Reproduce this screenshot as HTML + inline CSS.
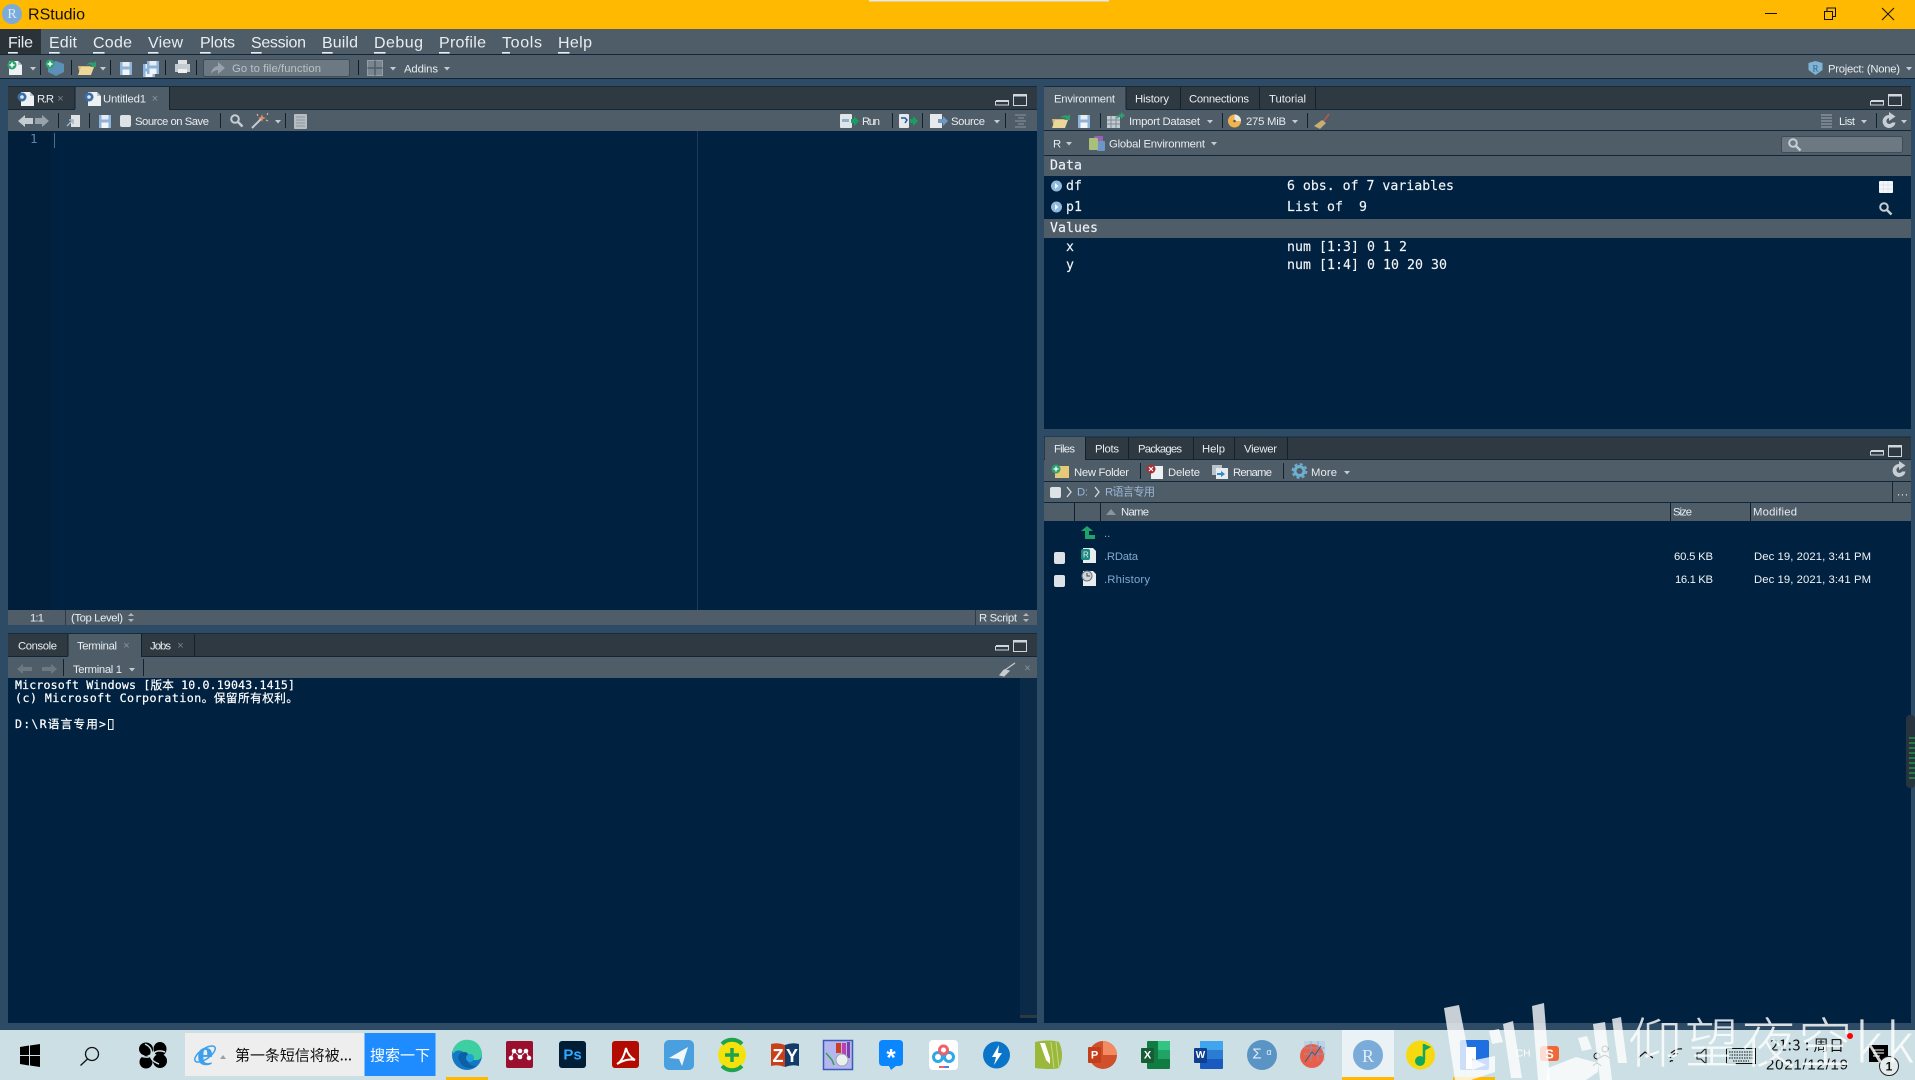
<!DOCTYPE html>
<html><head><meta charset="utf-8"><title>RStudio</title>
<style>
html,body{margin:0;padding:0;background:#2e4b66;overflow:hidden}
svg{display:block}
text{font-family:"Liberation Sans","Noto Sans CJK SC",sans-serif;dominant-baseline:central;fill:#e8edf0;white-space:pre}
.m{font-size:16px}
.u{font-size:11.3px;transform:translateY(.7px)}
.d{font-size:11.3px;fill:#f0f3f5}
.c{font-family:"DejaVu Sans Mono","Noto Sans CJK SC",monospace;font-size:13.2px;fill:#f2f5f7;transform:translateY(1px);stroke:#f2f5f7;stroke-width:.15px}
.h{font-family:"DejaVu Sans Mono","Noto Sans CJK SC",monospace;font-size:13.2px;fill:#eef2f5;transform:translateY(1px);stroke:#eef2f5;stroke-width:.15px}
.t{font-family:"DejaVu Sans Mono","Noto Sans CJK SC",monospace;font-size:11.6px;fill:#fff;stroke:#fff;stroke-width:.2px}
.tb{font-family:"Noto Sans CJK SC","Liberation Sans",sans-serif}
.l{font-size:11.3px;fill:#7fa8d0}
</style></head><body>
<svg xmlns="http://www.w3.org/2000/svg" width="1915" height="1080" viewBox="0 0 1915 1080">
<defs>
<path id="ar" d="M0 0h6l-3 3.500z" fill="#c4ccd2"/>
<g id="file"><path d="M0 0h9l4 4v10H0z" fill="#eef1f3"/><path d="M9 0v4h4z" fill="#b9c3cb"/></g>
<g id="fileR"><use href="#file" transform="translate(3 0)"/><circle cx="4" cy="5" r="4.500" fill="#3a6ea8"/><circle cx="4" cy="5" r="1.800" fill="#dfe8f2"/></g>
<g id="save"><path d="M0 0h12v13H0z" fill="#8db4d8"/><rect x="2.500" y="0" width="7" height="4.500" fill="#e6edf3"/><rect x="2.500" y="7.500" width="7" height="5.500" fill="#f2f5f7"/></g>
<g id="min"><path d="M.5 1.500h13v3.500H.5z" fill="none" stroke="#cfd6db"/><rect x="1" y="0" width="13" height="2" fill="#cfd6db"/></g>
<g id="max"><rect x=".5" y=".5" width="13" height="11" fill="none" stroke="#cfd6db"/><rect x="0" y="0" width="14" height="2.500" fill="#cfd6db"/></g>
<g id="open"><path d="M0 5h13v9H2z" fill="#d4b873"/><path d="M3 6h13l-3 8H0z" fill="#ecd79a"/><path d="M8 4q4-4 8-2l2-2v6h-6l2-2q-3-1-6 0z" fill="#2f9e6e"/></g>
<g id="ref"><path d="M7 1a6.500 6.500 0 1 0 6.500 7.500h-3.500a3 3 0 1 1-3-4.500v3l6.500-4.500-6.500-4.500z" fill="#c7ced4"/></g>
<g id="srch"><circle cx="5" cy="5" r="3.800" fill="none" stroke="#c6cdd3" stroke-width="2"/><path d="M8 8l4.500 4.500" stroke="#c6cdd3" stroke-width="2.500"/></g>
<rect id="cb" width="11" height="12" rx="2" fill="#dde2e6"/>
</defs>

<rect width="1915" height="1080" fill="#2e4b66"/>
<!-- title -->
<rect width="1915" height="29" fill="#ffb900"/>
<rect x="869" width="240" height="1.500" fill="#e8e8e8"/>
<circle cx="12" cy="14" r="10" fill="#7babd8"/>
<text x="12" y="14.500" text-anchor="middle" style="font-family:'Liberation Serif',serif;font-size:14px;fill:#dde9f4">R</text>
<text x="28" y="15" class="m" style="fill:#111" textLength="57">RStudio</text>
<path d="M1765 13.500h12" stroke="#111" stroke-width="1"/>
<path d="M1824.500 11.500h8v8h-8zM1827 11v-3h8.500v8.500H1833" fill="none" stroke="#111"/>
<path d="M1882 8l12 12M1894 8l-12 12" stroke="#111" stroke-width="1"/>

<!-- menu -->
<rect y="29" width="1915" height="25" fill="#4f5d69"/>
<rect y="29" width="41" height="25" fill="#2b3338"/>
<rect y="54" width="1915" height="1" fill="#12263a"/>
<g class="m">
<text class="m" x="8" y="43" textLength="25"><tspan style="text-decoration:underline">F</tspan>ile</text>
<text class="m" x="49" y="43" textLength="28"><tspan style="text-decoration:underline">E</tspan>dit</text>
<text class="m" x="93" y="43" textLength="39"><tspan style="text-decoration:underline">C</tspan>ode</text>
<text class="m" x="148" y="43" textLength="35"><tspan style="text-decoration:underline">V</tspan>iew</text>
<text class="m" x="200" y="43" textLength="35"><tspan style="text-decoration:underline">P</tspan>lots</text>
<text class="m" x="251" y="43" textLength="55"><tspan style="text-decoration:underline">S</tspan>ession</text>
<text class="m" x="322" y="43" textLength="36"><tspan style="text-decoration:underline">B</tspan>uild</text>
<text class="m" x="374" y="43" textLength="49"><tspan style="text-decoration:underline">D</tspan>ebug</text>
<text class="m" x="439" y="43" textLength="47"><tspan style="text-decoration:underline">P</tspan>rofile</text>
<text class="m" x="502" y="43" textLength="40"><tspan style="text-decoration:underline">T</tspan>ools</text>
<text class="m" x="558" y="43" textLength="34"><tspan style="text-decoration:underline">H</tspan>elp</text>
</g>

<!-- toolbar -->
<rect y="55" width="1915" height="23" fill="#4f5d69"/>
<rect y="78" width="1915" height="1" fill="#12263a"/>
<g transform="translate(9 61)"><use href="#file"/></g><circle cx="12" cy="65" r="4.500" fill="#2aa36f"/><path d="M12 62.500v5M9.500 65h5" stroke="#fff" stroke-width="1.500"/>
<use href="#ar" x="30" y="67"/>
<path d="M40.500 60v15M71.500 60v15M110.500 60v15M165.500 60v15M196.500 60v15M358.500 60v15" stroke="#0e1c28"/>
<path d="M56 61l8 3v8l-8 4-8-4v-8z" fill="#5b90b8"/><circle cx="50" cy="64" r="4.500" fill="#2aa36f"/><path d="M50 61.500v5M47.500 64h5" stroke="#fff" stroke-width="1.500"/>
<use href="#open" x="78" y="61"/><use href="#ar" x="100" y="67"/>
<use href="#save" x="120" y="62"/>
<use href="#save" x="143" y="64"/><use href="#save" x="147" y="61"/>
<path d="M178 60h9v4h-9z" fill="#dfe3e6"/><path d="M175 64h15v8h-15z" fill="#c4ccd2"/><rect x="178" y="69" width="9" height="4" fill="#eef1f3"/>
<rect x="203.500" y="59.500" width="146" height="17" rx="2" fill="#6c7882" stroke="#3e4c58"/>
<path d="M211 74q1-7 7-8v-4l7 6-7 6v-4q-4 0-7 4z" fill="#98a2aa"/>
<text x="232" y="68.500" class="u" style="fill:#b9c1c7" textLength="89">Go to file/function</text>
<g fill="#7a868f" stroke="#94a0a8"><rect x="367.500" y="60.500" width="15" height="15"/><path d="M375 60.500v15M367.500 68h15" stroke="#4f5d69" stroke-width="1.500"/></g>
<use href="#ar" x="390" y="67"/>
<text x="404" y="69" class="u" textLength="34">Addins</text><use href="#ar" x="444" y="67"/>
<path d="M1815.500 61l7 2v7l-7 5-7-5v-7z" fill="#7fb4d4"/><text x="1812.500" y="68.500" style="font-family:'Liberation Serif',serif;font-size:9px;fill:#2d5e88">R</text>
<text x="1828" y="69" class="u" textLength="72">Project: (None)</text><use href="#ar" x="1906" y="67"/>

<!-- source pane -->
<rect x="8" y="86" width="1029" height="24" fill="#2f3941"/>
<rect x="8" y="86" width="1029" height="1" fill="#1a2a38"/>
<rect x="8" y="109" width="1029" height="1" fill="#12263a"/>
<rect x="8" y="87" width="67" height="22" fill="#2f3941"/>
<rect x="75" y="87" width="94" height="23" fill="#4f5d69"/>
<path d="M75 87v22M169.500 87v22" stroke="#12212e"/>
<use href="#fileR" x="18" y="92"/>
<text x="37" y="99" class="u" textLength="17" lengthAdjust="spacing">R.R</text>
<text x="60.500" y="99" text-anchor="middle" style="font-size:11px;fill:#79838b">×</text>
<use href="#fileR" x="85" y="92"/>
<text x="103" y="99" class="u" textLength="43">Untitled1</text>
<text x="155" y="99" text-anchor="middle" style="font-size:11px;fill:#8a949b">×</text>
<use href="#min" x="995" y="100"/><use href="#max" x="1013" y="94"/>

<rect x="8" y="110" width="1029" height="21" fill="#4f5d69"/>
<path d="M18 121l7-6v3h8v6h-8v3z" fill="#c4cbd1"/><path d="M49 121l-7-6v3h-7v6h7v3z" fill="#98a2aa"/>
<path d="M58.500 113v15M89.500 113v15M220.500 113v15M285.500 113v15M892.500 113v15M922.500 113v15M1005.500 113v15" stroke="#12212e"/>
<rect x="71" y="115" width="9" height="12" fill="#dfe3e6"/><path d="M67 126l6-6m-4 0h4v4" fill="none" stroke="#9fb3c4" stroke-width="1.500"/>
<use href="#save" x="99" y="115"/>
<rect x="120" y="115" width="11" height="12" rx="2" fill="#dde2e6"/>
<text x="135" y="121.500" class="u" textLength="74">Source on Save</text>
<use href="#srch" x="230" y="114"/>
<path d="M252 128l10-10" stroke="#c8ccd0" stroke-width="2"/><path d="M262 114l1 3 3 1-3 1-1 3-1-3-3-1 3-1z" fill="#e09060"/><path d="M257 114l1 2M268 113l-1 2M268 121l-2-1" stroke="#e4b9a0"/>
<use href="#ar" x="275" y="120"/>
<rect x="294" y="114" width="13" height="15" rx="1" fill="#b6bec4"/><path d="M296 117h9M296 120h9M296 123h9M296 126h9" stroke="#8b959d"/>
<rect x="840" y="114" width="12" height="14" rx="1" fill="#dfe4e8"/><rect x="842" y="119" width="7" height="3" fill="#8db0cc"/><path d="M851 119h3v-3l5 5-5 5v-3h-3z" fill="#1b9e62"/>
<text x="862" y="121.500" class="u" textLength="18">Run</text>
<rect x="899" y="114" width="10" height="14" rx="1" fill="#e5e9ec"/><path d="M901 118h4l2 2-2 3" fill="none" stroke="#2255a4" stroke-width="1.500"/><path d="M910 119h3v-3l5 5-5 5v-3h-3z" fill="#1b9e62"/>
<rect x="930" y="114" width="12" height="14" fill="#e5e9ec"/><path d="M938 119h5v-3l5 5-5 5v-3h-5z" fill="#6f9ac0"/>
<text x="951" y="121.500" class="u" textLength="34">Source</text><use href="#ar" x="994" y="120"/>
<path d="M1015 115h11M1018 118h6M1015 121h11M1018 124h6M1015 127h11" stroke="#8b959d"/>

<rect x="8" y="131" width="1029" height="479" fill="#002240"/>
<rect x="8" y="131" width="43" height="479" fill="#011e3a"/>
<rect x="697" y="131" width="1" height="479" fill="#1f3b55"/>
<text x="30" y="138.500" class="h" style="fill:#5a86ad;stroke:none;font-size:12.500px;transform:none">1</text>
<rect x="54" y="133" width="1" height="15" fill="#4a6e8e"/>
<rect x="8" y="610" width="1029" height="15" fill="#4f5d69"/>
<path d="M65.500 610v15M975.500 610v15" stroke="#2d3a45"/>
<text x="30" y="618" class="u" textLength="14" lengthAdjust="spacing">1:1</text>
<text x="71" y="618" class="u" textLength="52">(Top Level)</text>
<path d="M128 616l3-3 3 3zM128 619l3 3 3-3z" fill="#aeb6bc"/>
<text x="979" y="618" class="u" textLength="38">R Script</text>
<path d="M1023 616l3-3 3 3zM1023 619l3 3 3-3z" fill="#aeb6bc"/>

<!-- console pane -->
<rect x="8" y="633" width="1029" height="24" fill="#2f3941"/>
<rect x="8" y="633" width="1029" height="1" fill="#1a2a38"/>
<rect x="8" y="656" width="1029" height="1" fill="#12263a"/>
<rect x="68" y="634" width="73" height="23" fill="#4f5d69"/>
<path d="M68 634v22M141.500 634v22M194.500 634v22" stroke="#12212e"/>
<text x="18" y="646" class="u" textLength="39">Console</text>
<text x="77" y="646" class="u" textLength="40">Terminal</text>
<text x="126.500" y="646" text-anchor="middle" style="font-size:11px;fill:#8a949b">×</text>
<text x="150" y="646" class="u" textLength="21">Jobs</text>
<text x="180.500" y="646" text-anchor="middle" style="font-size:11px;fill:#79838b">×</text>
<use href="#min" x="995" y="645"/><use href="#max" x="1013" y="640"/>
<rect x="8" y="657" width="1029" height="21" fill="#4f5d69"/>
<path d="M17 669l6-5v3h9v4h-9v3z" fill="#6c7882"/><path d="M57 669l-6-5v3h-9v4h9v3z" fill="#6c7882"/>
<path d="M63.500 659v17M143.500 659v17" stroke="#12212e"/>
<text x="73" y="669.500" class="u" textLength="49">Terminal 1</text><use href="#ar" x="129" y="668"/>
<path d="M1000 675l4-5 5 1-5 5zM1005 670l10-7" stroke="#c8ccd0" fill="#c8ccd0" stroke-width="1.200"/>
<text x="1027.500" y="668.500" text-anchor="middle" style="font-size:11px;fill:#8a949b">×</text>
<rect x="8" y="678" width="1029" height="345" fill="#002240"/>
<rect x="1020" y="678" width="17" height="339" fill="#0b2a47"/>
<rect x="1020" y="1015" width="17" height="3" fill="#2f3941"/>
<text x="15" y="685" class="t" textLength="280">Microsoft Windows [版本 10.0.19043.1415]</text>
<text x="15" y="698" class="t" textLength="283">(c) Microsoft Corporation。保留所有权利。</text>
<text x="15" y="724" class="t" textLength="91">D:\R语言专用&gt;</text>
<rect x="108.500" y="719.500" width="4.500" height="10" fill="none" stroke="#fff"/>

<!-- env pane -->
<rect x="1044" y="86" width="867" height="24" fill="#2f3941"/>
<rect x="1044" y="86" width="867" height="1" fill="#1a2a38"/>
<rect x="1044" y="109" width="867" height="1" fill="#12263a"/>
<rect x="1044" y="87" width="82" height="23" fill="#4f5d69"/>
<path d="M1126 87v22M1180.500 87v22M1259.500 87v22M1315.500 87v22" stroke="#12212e"/>
<text x="1054" y="99" class="u" textLength="61">Environment</text>
<text x="1135" y="99" class="u" textLength="34">History</text>
<text x="1189" y="99" class="u" textLength="60">Connections</text>
<text x="1269" y="99" class="u" textLength="37">Tutorial</text>
<use href="#min" x="1870" y="100"/><use href="#max" x="1888" y="94"/>
<rect x="1044" y="110" width="867" height="20" fill="#4f5d69"/>
<rect x="1044" y="130" width="867" height="1" fill="#12263a"/>
<use href="#open" x="1052" y="114"/>
<use href="#save" x="1078" y="115"/>
<path d="M1100.500 113v15M1222.500 113v15M1307.500 113v15M1876.500 113v15M1081.500 134v15" stroke="#12212e"/>
<g><rect x="1107" y="116" width="13" height="12" fill="#c2cbd2"/><path d="M1107 120h13M1107 124h13M1111 116v12M1116 116v12" stroke="#7d8a94"/><path d="M1116 119q2-5 5-5v-2l4 3.500-4 3.500v-2q-2 0-5 2z" fill="#2f9e6e"/></g>
<text x="1129" y="121.500" class="u" textLength="71">Import Dataset</text><use href="#ar" x="1207" y="120"/>
<circle cx="1234.500" cy="121" r="6.500" fill="#f2b44a"/><path d="M1234.500 121V114.500a6.500 6.500 0 0 1 6.500 6.500z" fill="#e9e9e9"/><circle cx="1234.500" cy="121" r="1.300" fill="#4f5d69"/>
<text x="1246" y="121.500" class="u" textLength="40">275 MiB</text><use href="#ar" x="1292" y="120"/>
<path d="M1329 114l-6 8" stroke="#b65a4e" stroke-width="1.500"/><path d="M1322 120l-8 6 6 3 6-6z" fill="#c9ae74"/>
<path d="M1821 115h11M1821 118h11M1821 121h11M1821 124h11M1821 127h11" stroke="#a3adb4"/>
<text x="1839" y="121.500" class="u" textLength="16">List</text><use href="#ar" x="1861" y="120"/>
<use href="#ref" x="1882" y="114"/><use href="#ar" x="1901" y="120"/>
<rect x="1044" y="131" width="867" height="24" fill="#4f5d69"/>
<rect x="1044" y="155" width="867" height="1" fill="#12263a"/>
<text x="1053" y="144" class="u" textLength="7" lengthAdjust="spacing">R</text><use href="#ar" x="1066" y="142"/>
<rect x="1094" y="136" width="9" height="10" rx="1" fill="#9c62b0"/><rect x="1097" y="141" width="8" height="10" rx="1" fill="#6a96c8"/><rect x="1089" y="138" width="9" height="12" rx="1" fill="#a9bf7a"/>
<text x="1109" y="144" class="u" textLength="96">Global Environment</text><use href="#ar" x="1211" y="142"/>
<rect x="1781.500" y="136.500" width="121" height="16" rx="2" fill="#6c7882" stroke="#3e4c58"/>
<use href="#srch" x="1788" y="138"/>
<rect x="1044" y="156" width="867" height="273" fill="#002240"/>
<rect x="1044" y="156" width="867" height="20" fill="#4f5d69"/>
<text x="1050" y="165" class="h" textLength="32">Data</text>
<circle cx="1056.500" cy="186" r="5.500" fill="#8fb9de"/><path d="M1055 183l3.500 3-3.500 3z" fill="#f4f7fa"/>
<text x="1066" y="185.500" class="c" textLength="16">df</text>
<text x="1287" y="185.500" class="c" textLength="167">6 obs. of 7 variables</text>
<circle cx="1056.500" cy="207" r="5.500" fill="#8fb9de"/><path d="M1055 204l3.500 3-3.500 3z" fill="#f4f7fa"/>
<text x="1066" y="206.500" class="c" textLength="16">p1</text>
<text x="1287" y="206.500" class="c" textLength="80">List of  9</text>
<rect x="1044" y="219" width="867" height="19" fill="#4f5d69"/>
<text x="1050" y="227.500" class="h" textLength="48">Values</text>
<text x="1066" y="246.500" class="c">x</text><text x="1287" y="246.500" class="c" textLength="120">num [1:3] 0 1 2</text>
<text x="1066" y="264.500" class="c">y</text><text x="1287" y="264.500" class="c" textLength="160">num [1:4] 0 10 20 30</text>
<rect x="1879" y="181" width="14" height="12" rx="1" fill="#f4f7fa"/><path d="M1883.500 181v12M1888 181v12M1879 185h14M1879 189h14" stroke="#d6e0ea" stroke-width=".7"/>
<use href="#srch" x="1879" y="202"/>

<!-- files pane -->
<rect x="1044" y="437" width="867" height="23" fill="#2f3941"/>
<rect x="1044" y="436.500" width="867" height="1" fill="#1a2a38"/>
<rect x="1044" y="459" width="867" height="1" fill="#12263a"/>
<rect x="1045" y="437" width="40" height="23" fill="#4f5d69"/>
<path d="M1085.500 437v22M1128.500 437v22M1193.500 437v22M1234.500 437v22M1287.500 437v22" stroke="#12212e"/>
<text x="1054" y="449" class="u" textLength="21">Files</text>
<text x="1095" y="449" class="u" textLength="24">Plots</text>
<text x="1138" y="449" class="u" textLength="44">Packages</text>
<text x="1202" y="449" class="u" textLength="23">Help</text>
<text x="1244" y="449" class="u" textLength="33">Viewer</text>
<use href="#min" x="1870" y="450"/><use href="#max" x="1888" y="445"/>
<rect x="1044" y="460" width="867" height="21" fill="#4f5d69"/>
<rect x="1044" y="481" width="867" height="1" fill="#12263a"/>
<path d="M1055 466h14v12h-14z" fill="#e5c878"/><circle cx="1056" cy="469" r="4.500" fill="#2aa36f"/><path d="M1056 466.500v5M1053.500 469h5" stroke="#fff" stroke-width="1.300"/>
<text x="1074" y="472.500" class="u" textLength="55">New Folder</text>
<path d="M1140.500 463v16M1283.500 463v16" stroke="#12212e"/>
<rect x="1151" y="466" width="12" height="13" fill="#eef1f3"/><circle cx="1151" cy="469" r="4.500" fill="#a92e34"/><path d="M1149 467l4 4M1153 467l-4 4" stroke="#fff" stroke-width="1.200"/>
<text x="1168" y="472.500" class="u" textLength="32">Delete</text>
<path d="M1212 465h10v10h-10z" fill="#b9c3cb"/><path d="M1216 468h12v11h-12z" fill="#e7ebee"/><path d="M1217 473h4v-2l4 3-4 3v-2h-4z" fill="#2d8bc9"/>
<text x="1233" y="472.500" class="u" textLength="39">Rename</text>
<circle cx="1299.500" cy="471" r="4.500" fill="none" stroke="#6db0d0" stroke-width="3"/><circle cx="1299.500" cy="471" r="7" fill="none" stroke="#6db0d0" stroke-width="1.800" stroke-dasharray="3 2.500"/>
<text x="1311" y="472.500" class="u" textLength="26">More</text><use href="#ar" x="1344" y="471"/>
<use href="#ref" x="1892" y="463"/>
<rect x="1044" y="482" width="867" height="20" fill="#4f5d69"/>
<rect x="1044" y="502" width="867" height="1" fill="#12263a"/>
<rect x="1050" y="487" width="11" height="11" rx="2" fill="#dde2e6"/>
<path d="M1067 487l4 5-4 5M1095 487l4 5-4 5" fill="none" stroke="#d5dbe0" stroke-width="1.300"/>
<text x="1077" y="492" class="u" style="fill:#9ab8d4" textLength="11" lengthAdjust="spacing">D:</text>
<text x="1105" y="492" class="u" style="fill:#9ab8d4" textLength="50">R语言专用</text>
<rect x="1892" y="482" width="1" height="20" fill="#12263a"/>
<text x="1897" y="492" class="u" textLength="11">...</text>
<rect x="1044" y="503" width="867" height="18" fill="#4f5d69"/>
<path d="M1074.500 503v18M1100.500 503v18M1670.500 503v18M1750.500 503v18" stroke="#12212e"/>
<path d="M1106 515l5-6 5 6z" fill="#8b959d"/>
<text x="1121" y="512" class="u" textLength="28">Name</text>
<text x="1673" y="512" class="u" textLength="19">Size</text>
<text x="1753" y="512" class="u" textLength="44">Modified</text>
<rect x="1044" y="521" width="867" height="502" fill="#002240"/>
<path d="M1081 531l6-5 6 5h-4v4h6v4h-10v-8z" fill="#1ea46b"/>
<text x="1104" y="534" class="l">..</text>
<use href="#cb" x="1054" y="552"/>
<path d="M1083 548h10l3 3v12h-13z" fill="#e9ecef"/><rect x="1081" y="549" width="9" height="11" rx="2" fill="#1c8a80"/><text x="1083" y="555" style="font-size:8px;fill:#e6f2ef">R</text>
<text x="1104" y="557" class="l" textLength="34">.RData</text>
<text x="1674" y="557" class="d" textLength="39">60.5 KB</text>
<text x="1754" y="557" class="d" textLength="117">Dec 19, 2021, 3:41 PM</text>
<use href="#cb" x="1054" y="575"/>
<path d="M1083 571h10l3 3v12h-13z" fill="#e9ecef"/><circle cx="1087" cy="576" r="5" fill="#cfd5da" stroke="#6a747c"/><path d="M1087 573v3h3" stroke="#3b454c" fill="none"/>
<text x="1104" y="580" class="l" textLength="46">.Rhistory</text>
<text x="1675" y="580" class="d" textLength="38">16.1 KB</text>
<text x="1754" y="580" class="d" textLength="117">Dec 19, 2021, 3:41 PM</text>

<!-- taskbar -->
<rect y="1030" width="1915" height="50" fill="#cbdfe4"/>
<path d="M20 1047l9-1.500v9.500h-9zM30 1045.500l10-1.500v11h-10zM20 1056h9v9.500l-9-1.500zM30 1056h10v11l-10-1.500z" fill="#000"/>
<circle cx="92" cy="1054" r="6.500" fill="none" stroke="#111" stroke-width="1.300"/><path d="M87.500 1059l-7 6.500" stroke="#111" stroke-width="1.300"/>
<g fill="#000"><ellipse cx="146" cy="1049" rx="7" ry="6.500"/><ellipse cx="160" cy="1049" rx="6.500" ry="7"/><ellipse cx="146" cy="1062" rx="6.500" ry="6.500"/><ellipse cx="160" cy="1061" rx="7" ry="7"/></g>
<path d="M145 1044q8 4 6 10t8 10M141 1056q8 3 12-2t12-2" stroke="#cbdfe4" stroke-width="1.500" fill="none"/>
<rect x="185" y="1033" width="180" height="43" fill="#eeeeee"/>
<rect x="364.500" y="1033" width="71" height="43" fill="#1e8cff"/>
<text x="205" y="1053" text-anchor="middle" style="font-family:'Liberation Serif',serif;font-size:36px;font-weight:bold;fill:#3ea0ec">e</text>
<ellipse cx="205" cy="1054" rx="12" ry="5" transform="rotate(-35 205 1054)" fill="none" stroke="#3ea0ec" stroke-width="1.500"/>
<path d="M220 1059l3-4 3 4z" fill="#9aa0a4"/>
<text x="235" y="1055" class="tb" style="font-size:15px;fill:#111" textLength="117">第一条短信将被...</text>
<text x="370" y="1055" class="tb" style="font-size:15px;fill:#fff" textLength="60">搜索一下</text>
<circle cx="467" cy="1055" r="15" fill="#1478c4"/><path d="M453 1049q6-11 17-9 11 2 12 15-1 6-8 5-6-1-8-4-3-7-10-5-2 1-3 3z" fill="#3ecfa0"/><path d="M458 1058q1-6 7-6 5 1 3 7-1 7 9 7-10 5-16-2z" fill="#0d5fa8"/><circle cx="470" cy="1058" r="4" fill="#1fa0d8"/>
<rect x="446" y="1077" width="42" height="3" fill="#ffb900"/>
<rect x="506" y="1041" width="27" height="27" rx="2" fill="#9a0e2e"/><g fill="#fff"><circle cx="514" cy="1051" r="2.300"/><circle cx="520" cy="1051" r="2.300"/><circle cx="526" cy="1051" r="2.300"/><circle cx="511" cy="1058" r="2.300"/><circle cx="520" cy="1057" r="2.300"/><circle cx="529" cy="1058" r="2.300"/></g><path d="M511 1058l3-7 6 6 6-6 3 7" stroke="#fff" fill="none"/>
<rect x="559" y="1041" width="27" height="27" rx="3" fill="#001e36"/><text x="572.500" y="1055" text-anchor="middle" style="font-size:15px;font-weight:bold;fill:#31a8ff">Ps</text>
<rect x="612" y="1041" width="27" height="27" rx="3" fill="#b30b00"/><path d="M617 1064q6-3 9-16 2 8 9 12-8-2-18 4z" fill="none" stroke="#fff" stroke-width="2"/>
<rect x="664" y="1040" width="30" height="30" rx="5" fill="#4a9fde"/><path d="M669 1058l19-11-6 19-3-7z" fill="#f1f7fb"/>
<circle cx="732" cy="1055" r="14" fill="#f5e20c"/><path d="M722 1044a14 14 0 0 1 20 0M722 1066a14 14 0 0 0 20 0" fill="none" stroke="#1fa34d" stroke-width="4"/><path d="M732 1048v14M725 1055h14" stroke="#1fa34d" stroke-width="3.500"/>
<path d="M771 1044q7-2 14 1v22q-7-3-14-1z" fill="#c8401a"/><path d="M785 1045q7-3 14-1v22q-7-2-14 1z" fill="#123d6b"/>
<text x="778" y="1056" text-anchor="middle" style="font-size:18px;font-weight:bold;fill:#fff">Z</text><text x="792" y="1056" text-anchor="middle" style="font-size:18px;font-weight:bold;fill:#fff">Y</text>
<rect x="823.500" y="1040.500" width="29" height="29" fill="#b6b6ee" stroke="#3b5bb8" stroke-width="1.500"/><rect x="836" y="1043" width="5" height="10" fill="#c8402a"/><rect x="842" y="1043" width="4" height="14" fill="#c03eb0"/><rect x="847" y="1042" width="3" height="16" fill="#7a3fb0"/><circle cx="842" cy="1060" r="6" fill="#eceff0" stroke="#9aa"/><path d="M826 1053l6 7 2 5" stroke="#2fa24c" fill="none" stroke-width="1.500"/>
<path d="M879 1044q0-4 4-4h16q4 0 4 4v18q0 4-4 4h-3l-5 4-2-4h-6q-4 0-4-4z" fill="#0a86ff"/><text x="891" y="1058" text-anchor="middle" style="font-size:24px;font-weight:bold;fill:#fff">*</text>
<rect x="929" y="1040" width="29" height="30" rx="4" fill="#fff"/><g fill="none" stroke-width="3"><circle cx="938" cy="1057" r="4.500" stroke="#2ea8e8"/><circle cx="949" cy="1057" r="4.500" stroke="#2ea8e8"/><circle cx="943.500" cy="1050" r="4" stroke="#f0606c"/></g><rect x="939" y="1066" width="5" height="2" fill="#f0606c"/><rect x="944" y="1066" width="5" height="2" fill="#5b7be8"/>
<circle cx="996.500" cy="1055" r="13.500" fill="#0a74c9"/><path d="M999 1045l-7 12h4l-2 8 8-12h-4z" fill="#fff"/>
<path d="M1035 1042q14-3 24 0 6 13 0 26-7 2-24 0z" fill="#9ab83a"/><path d="M1040 1043l6 17 4 4 0-6-5-15z" fill="#fff"/><path d="M1051 1042l3 26M1056 1042l3 26" stroke="#c5d98a"/>
<circle cx="1103" cy="1055" r="14" fill="#d0502c"/><path d="M1103 1041a14 14 0 0 1 14 14h-14z" fill="#f28a62"/><rect x="1088" y="1047" width="13" height="16" rx="1" fill="#c43e1c"/><text x="1094.500" y="1055.500" text-anchor="middle" style="font-size:11px;font-weight:bold;fill:#fff">P</text>
<rect x="1147" y="1041" width="23" height="28" rx="1" fill="#107c41"/><rect x="1158" y="1041" width="12" height="9" fill="#33c481"/><rect x="1158" y="1050" width="12" height="9" fill="#21a366"/><rect x="1141" y="1048" width="13" height="15" rx="1" fill="#185c37"/><text x="1147.500" y="1055.500" text-anchor="middle" style="font-size:11px;font-weight:bold;fill:#fff">X</text>
<rect x="1200" y="1041" width="23" height="28" rx="1" fill="#185abd"/><rect x="1200" y="1041" width="23" height="9" fill="#41a5ee"/><rect x="1200" y="1050" width="23" height="9" fill="#2b7cd3"/><rect x="1194" y="1048" width="13" height="15" rx="1" fill="#103f91"/><text x="1200.500" y="1055.500" text-anchor="middle" style="font-size:10px;font-weight:bold;fill:#fff">W</text>
<circle cx="1262" cy="1055" r="15" fill="#5a94c4"/><text x="1257" y="1054" text-anchor="middle" style="font-size:15px;fill:#e2eef7">Σ</text><text x="1269" y="1052" style="font-size:9px;fill:#e2eef7" text-anchor="middle">α</text>
<rect x="1304" y="1041" width="21" height="20" fill="#b9d2e6"/><circle cx="1312" cy="1056" r="12" fill="#e8604c"/><path d="M1304 1048h21M1304 1054h21M1311 1041v20M1318 1041v20" stroke="#7ca4c8" stroke-width=".7"/><path d="M1305 1062l7-10 3 3 6-9" stroke="#2f5f8a" fill="none"/>
<rect x="1342" y="1030" width="52" height="50" fill="#eaf2f5"/>
<circle cx="1368" cy="1055" r="15" fill="#7babd8"/><text x="1368" y="1056" text-anchor="middle" style="font-family:'Liberation Serif',serif;font-size:18px;fill:#e3edf6">R</text>
<rect x="1342" y="1077" width="52" height="3" fill="#ffb900"/>
<circle cx="1420.500" cy="1055" r="14.500" fill="#f7d90f"/><path d="M1424 1044v16" stroke="#10a860" stroke-width="2.500"/><circle cx="1420" cy="1061" r="5" fill="#10a860"/><path d="M1424 1044l7 3-7 4z" fill="#10a860"/>
<rect x="1460" y="1040" width="29" height="30" rx="2" fill="#1e6fe0"/><rect x="1466" y="1047" width="10" height="22" fill="#fff"/><path d="M1472 1058l14 7-14 5z" fill="#cfe0fa"/>
<rect x="1453" y="1077" width="42" height="3" fill="#ffb900"/>
<text x="1516" y="1054" style="font-size:10px;fill:#fff">CH</text>
<rect x="1540" y="1046" width="19" height="15" rx="3" fill="#f0673a"/><text x="1549.500" y="1054" text-anchor="middle" style="font-size:13px;font-weight:bold;fill:#fff">S</text>
<g fill="none" stroke="#222"><circle cx="1605" cy="1049" r="3"/><path d="M1600 1058q5-5 9 0"/><circle cx="1597" cy="1056" r="3"/><path d="M1593 1066q4-5 8 0"/></g>
<path d="M1638 1058l7-6 8 6" fill="none" stroke="#111" stroke-width="1.200"/>
<g fill="none" stroke="#111" stroke-width="1.200"><path d="M1670 1062q1-2 3-1M1670 1058q4-6 8-4M1671 1053q6-5 11-4"/></g>
<path d="M1697 1053h4l5-5v16l-5-5h-4z" fill="none" stroke="#111"/>
<rect x="1726.500" y="1048.500" width="29" height="15" fill="none" stroke="#111"/><path d="M1729 1052h24M1729 1055h24M1729 1058h24M1733 1061h16" stroke="#111" stroke-dasharray="1.500 1"/>
<text x="1770" y="1045" class="tb" style="font-size:15px;fill:#111" textLength="74">21:3 : 周日</text>
<text x="1766" y="1065" style="font-size:15px;fill:#111" textLength="82">2021/12/19</text>
<circle cx="1850" cy="1036" r="3" fill="#f00"/>
<rect x="1869" y="1045" width="19" height="17" fill="#000"/><path d="M1873 1050h11M1873 1053h11M1873 1056h7" stroke="#fff"/>
<circle cx="1889" cy="1066" r="9.500" fill="#e4ecee" stroke="#222"/><text x="1889" y="1066.500" text-anchor="middle" style="font-size:12px;font-weight:bold;fill:#111">1</text>
<!-- edge widget -->
<rect x="1906" y="715" width="9" height="73" rx="4" fill="#27343d"/><path d="M1909 738h6M1909 743h6M1909 748h6M1909 753h6M1909 758h6M1909 763h6M1909 768h6M1909 773h6M1909 778h6" stroke="#20c050"/>
<!-- watermark -->
<g fill="#fff" fill-opacity=".78">
<path d="M1444 1008l15-3 11 56 25-5v16l-24 8h-16z"/>
<path d="M1489 1031l10-2 4 13-11 2zM1503 1024l10-3 9 57h-11z"/>
<path d="M1532 1006l12-3 6 77h-12z"/>
<path d="M1546 1080l2-12 28-11 22 6v9l-12 8zM1578 1038l9-2 5 13-10 2zM1593 1024l12-2 7 58h-12z"/>
<path d="M1612 1019l9-2 6 46h-9z"/>
</g>
<text x="1628" y="1039" class="tb" style="font-size:54px;fill:#fff;fill-opacity:.82;font-weight:300" textLength="286">仰望夜空kk</text>
</svg>
</body></html>
